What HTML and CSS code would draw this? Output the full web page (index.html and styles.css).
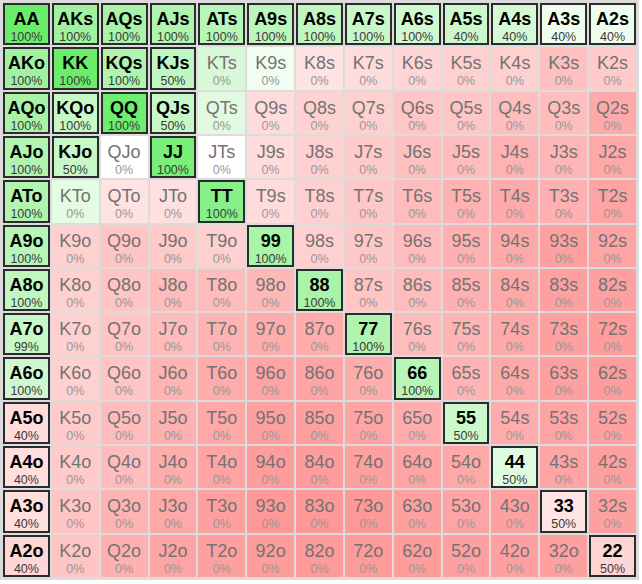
FILE: index.html
```html
<!DOCTYPE html>
<html lang="en">
<head>
<meta charset="utf-8">
<title>Range grid</title>
<link rel="stylesheet" href="styles.css">
</head>
<body>
<div class="grid" id="grid"></div>
<script src="script.js"></script>
</body>
</html>
```

FILE: styles.css
```css
html, body {
  margin: 0;
  padding: 0;
  background: #ffffff;
}

.grid {
  box-sizing: border-box;
  width: 639px;
  height: 580px;
  padding: 3px;
  background: #dcdcdc;
  display: grid;
  grid-template-columns: repeat(13, 1fr);
  grid-template-rows: repeat(13, 1fr);
  gap: 2px;
  font-family: "Liberation Sans", Arial, sans-serif;
}

.cell {
  box-sizing: border-box;
  display: flex;
  flex-direction: column;
  align-items: center;
  justify-content: flex-start;
  padding-top: 4px;
  border: 2px solid transparent;
  overflow: hidden;
}

.hand {
  font-size: 18px;
  line-height: 20px;
  color: #737373;
}

.pct {
  font-size: 12.5px;
  line-height: 15px;
  margin-top: 1px;
  color: #979797;
}

.cell.on {
  border-color: #2b2b2b;
}

.cell.on .hand {
  color: #000000;
  font-weight: bold;
}

.cell.on .pct {
  color: #3a3a3a;
}
```

FILE: script.js
```js
(function () {
  var ranks = ["A", "K", "Q", "J", "T", "9", "8", "7", "6", "5", "4", "3", "2"];
  var colors = [
    "6aee6a a0f2a0 a8f3a8 b0f4b0 b8f6b8 bcf6bc c0f7c0 c8f8c8 d0f9d0 ccf8cc d4f9d4 eefdee eefdee",
    "a0f2a0 6aee6a b0f4b0 c0f6c0 d8f8d8 f2fdf2 ffe2e2 ffdcdc ffd6d6 ffd0d0 ffd0d0 ffc0c0 ffcaca",
    "a8f3a8 c8f8c8 6eee6e c8f8c8 e2fae2 ffdcdc ffd2d2 ffd0d0 ffc6c6 ffc6c6 ffbebe ffbebe ffaaaa",
    "b0f4b0 c8f8c8 ffffff 78ef78 ffffff ffdcdc ffd0d0 ffcaca ffc0c0 ffbcbc ffb2b2 ffb6b6 ffa8a8",
    "b0f4b0 e4fce4 ffe2e2 ffe0e0 88f088 ffdcdc ffd0d0 ffc8c8 ffbcbc ffb2b2 ffaaaa ffb0b0 ffa4a4",
    "b8f5b8 ffd0d0 ffc4c4 ffcaca ffd0d0 a8f4a8 ffd0d0 ffc8c8 ffbcbc ffb0b0 ffa8a8 ffa0a0 ffa4a4",
    "c0f6c0 ffd0d0 ffc4c4 ffbcbc ffbcbc ffb8b8 a8f4a8 ffc4c4 ffbcbc ffb0b0 ffa8a8 ffa0a0 ffa0a0",
    "c8f8c8 ffd0d0 ffc4c4 ffbcbc ffb4b4 ffacac ffacac b0f4b0 ffbcbc ffb4b4 ffa8a8 ffa0a0 ff9c9c",
    "d0f8d0 ffd0d0 ffc4c4 ffb4b4 ffacac ffa4a4 ffa4a4 ffacac b8f6b8 ffb4b4 ffa8a8 ffa0a0 ff9c9c",
    "ffdcdc ffcaca ffbcbc ffb0b0 ffa8a8 ffa0a0 ffa0a0 ffa4a4 ffacac ccf8cc ffacac ffa4a4 ffa0a0",
    "ffdede ffcaca ffbcbc ffacac ffa4a4 ff9c9c ff9c9c ffa0a0 ffa4a4 ffa8a8 e0fce0 ffa4a4 ffa0a0",
    "ffdede ffc4c4 ffb4b4 ffa8a8 ffa0a0 ff9898 ff9898 ff9898 ffa0a0 ffa4a4 ffa0a0 ffe4e4 ffa0a0",
    "ffd6d6 ffc4c4 ffb0b0 ffa4a4 ffa0a0 ff9c9c ff9a9a ff9a9a ff9c9c ffa0a0 ffa0a0 ffa0a0 ffd4d4"
  ];
  var selected = {
    "AA": 100, "AKs": 100, "AQs": 100, "AJs": 100, "ATs": 100, "A9s": 100, "A8s": 100,
    "A7s": 100, "A6s": 100, "A5s": 40, "A4s": 40, "A3s": 40, "A2s": 40,
    "AKo": 100, "KK": 100, "KQs": 100, "KJs": 50,
    "AQo": 100, "KQo": 100, "QQ": 100, "QJs": 50,
    "AJo": 100, "KJo": 50, "JJ": 100,
    "ATo": 100, "TT": 100,
    "A9o": 100, "99": 100,
    "A8o": 100, "88": 100,
    "A7o": 99, "77": 100,
    "A6o": 100, "66": 100,
    "A5o": 40, "55": 50,
    "A4o": 40, "44": 50,
    "A3o": 40, "33": 50,
    "A2o": 40, "22": 50
  };
  var grid = document.getElementById("grid");
  for (var i = 0; i < 13; i++) {
    var rowColors = colors[i].split(" ");
    for (var j = 0; j < 13; j++) {
      var name;
      if (i === j) name = ranks[i] + ranks[j];
      else if (i < j) name = ranks[i] + ranks[j] + "s";
      else name = ranks[j] + ranks[i] + "o";
      var cell = document.createElement("div");
      cell.className = "cell";
      var pct = 0;
      if (selected.hasOwnProperty(name)) {
        cell.className += " on";
        pct = selected[name];
      }
      cell.style.backgroundColor = "#" + rowColors[j];
      var h = document.createElement("div");
      h.className = "hand";
      h.textContent = name;
      var p = document.createElement("div");
      p.className = "pct";
      p.textContent = pct + "%";
      cell.appendChild(h);
      cell.appendChild(p);
      grid.appendChild(cell);
    }
  }
})();
```
